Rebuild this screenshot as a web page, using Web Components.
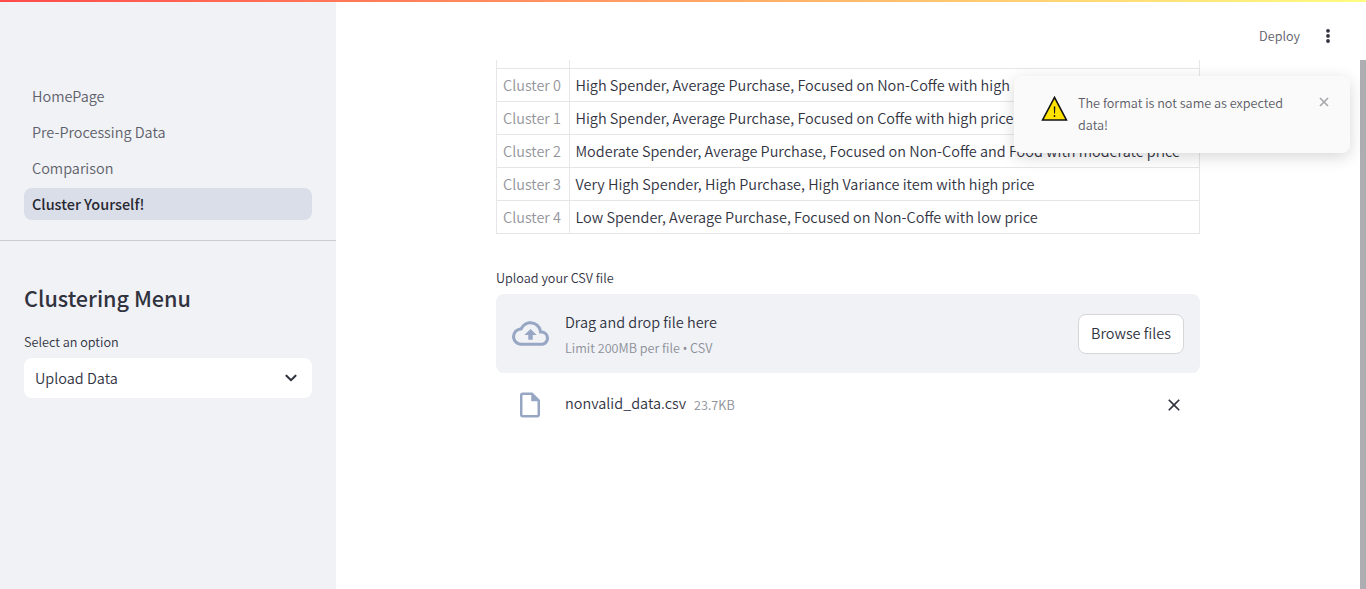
<!DOCTYPE html>
<html lang="en">
<head>
<meta charset="utf-8">
<title>Cluster Yourself!</title>
<style>
html,body{margin:0;height:100%;overflow:hidden;background:#fff}
body{font-family:"Noto Sans CJK SC","Noto Sans",sans-serif;font-weight:350;font-size:14.46px;line-height:24px;color:#31333f}
</style>
</head>
<body>
<app-shell>
  <side-bar slot="side">
    <nav-item slot="nav">HomePage</nav-item>
    <nav-item slot="nav">Pre-Processing Data</nav-item>
    <nav-item slot="nav">Comparison</nav-item>
    <nav-item slot="nav" active>Cluster Yourself!</nav-item>
    <select-box label="Select an option">Upload Data</select-box>
  </side-bar>
  <tool-bar slot="top"></tool-bar>
  <cluster-table>
    <cluster-row name=""></cluster-row>
    <cluster-row name="Cluster 0">High Spender, Average Purchase, Focused on Non-Coffe with high price</cluster-row>
    <cluster-row name="Cluster 1">High Spender, Average Purchase, Focused on Coffe with high price</cluster-row>
    <cluster-row name="Cluster 2">Moderate Spender, Average Purchase, Focused on Non-Coffe and Food with moderate price</cluster-row>
    <cluster-row name="Cluster 3">Very High Spender, High Purchase, High Variance item with high price</cluster-row>
    <cluster-row name="Cluster 4">Low Spender, Average Purchase, Focused on Non-Coffe with low price</cluster-row>
  </cluster-table>
  <file-uploader label="Upload your CSV file">
    <uploaded-file size="23.7KB">nonvalid_data.csv</uploaded-file>
  </file-uploader>
  <toast-message slot="toast">The format is not same as expected data!</toast-message>
</app-shell>
<script>
const define = (name, html) => customElements.define(name, class extends HTMLElement {
  constructor() {
    super();
    const t = document.createElement('template');
    t.innerHTML = html;
    this.attachShadow({mode: 'open'}).append(t.content.cloneNode(true));
    this.shadowRoot.querySelectorAll('[data-attr]').forEach(n => {
      n.textContent = this.getAttribute(n.dataset.attr) || '';
    });
  }
});

define('app-shell', `<style>
:host{display:grid;grid-template-columns:336px 1fr;height:100vh;position:relative;overflow:hidden}
.strip{position:absolute;inset:0 0 auto 0;height:2px;background:linear-gradient(90deg,#ff4b4b,#fffd80);z-index:2}
.page{display:grid;grid-template-rows:60px 1fr;min-width:0}
.view{display:grid;grid-template-columns:1fr 6px;min-height:0;overflow:hidden}
.col{padding:0 160px}
.bar{background:#adadb2}
.toast{position:absolute;top:76px;right:16px;z-index:3}
</style><div class="strip"></div><slot name="side"></slot>
<div class="page"><slot name="top"></slot><div class="view"><div class="col"><slot></slot></div><div class="bar"></div></div></div>
<div class="toast"><slot name="toast"></slot></div>`);

define('side-bar', `<style>
:host{display:block;background:#f0f2f6}
nav{display:flex;flex-direction:column;gap:4px;padding:80px 24px 20px;border-bottom:1px solid #cbcdd3}
section{padding:41px 24px 0}
h2{margin:0 0 18px;font-size:21.6px;line-height:32px;font-weight:500}
</style><nav><slot name="nav"></slot></nav><section><h2>Clustering Menu</h2><slot></slot></section>`);

define('nav-item', `<style>
:host{display:block;box-sizing:border-box;height:32px;line-height:32px;padding:0 8px;border-radius:8px;color:#5e6069}
:host([active]){background:#dadee9;color:#262730;font-weight:500}
</style><slot></slot>`);

define('select-box', `<style>
:host{display:block}
label{display:block;font-size:12.65px;line-height:20px;margin-bottom:6px}
.box{display:flex;align-items:center;justify-content:space-between;height:40px;padding:0 11px;background:#fff;border-radius:8px}
svg{width:20px;height:20px;display:block}
</style><label data-attr="label"></label><div class="box"><slot></slot>
<svg viewBox="0 0 24 24"><path fill="#31333f" fill-rule="evenodd" d="M12.707 15.707a1 1 0 0 1-1.414 0L5.646 10.061a1.25 1.25 0 1 1 1.77-1.77L12 12.88l4.583-4.589a1.25 1.25 0 1 1 1.77 1.77l-5.646 5.646Z"/></svg></div>`);

define('tool-bar', `<style>
:host{display:flex;box-sizing:border-box;align-items:center;justify-content:flex-end;gap:20px;height:60px;padding:12px 30px 0 0;font-size:12.65px;color:#5e6069}
svg{width:16px;height:16px;display:block}
</style><span>Deploy</span><svg viewBox="0 0 16 16" fill="#31333f"><circle cx="8" cy="2.8" r="1.9"/><circle cx="8" cy="7.9" r="1.9"/><circle cx="8" cy="13" r="1.9"/></svg>`);

define('cluster-table', `<style>
:host{display:block;box-sizing:border-box;border-left:1px solid #e6e6e9;border-right:1px solid #e6e6e9}
</style><slot></slot>`);

define('cluster-row', `<style>
:host{display:grid;box-sizing:border-box;grid-template-columns:73px 1fr;height:33px;border-bottom:1px solid #e6e6e9;white-space:nowrap}
:host([name=""]){height:9px}
span{padding:4px 5.5px 0;line-height:24px}
.n{padding-left:6px;color:#93949b;border-right:1px solid #e6e6e9}
</style><span class="n" data-attr="name"></span><span><slot></slot></span>`);

define('file-uploader', `<style>
:host{display:block;margin-top:34px}
label{display:block;font-size:12.65px;line-height:20px;margin-bottom:6px}
.drop{display:flex;box-sizing:border-box;align-items:center;height:79px;padding:0 16px;border-radius:8px;background:#f0f2f6}
svg{width:37px;height:37px;margin-right:16px;flex:none}
.txt{flex:1}
.txt small{display:block;font-size:12.65px;line-height:20px;margin-top:4px;color:#8d8f98}
.txt i{font:12px/1 "Noto Sans",sans-serif}
button{box-sizing:border-box;width:106px;height:40px;padding:0 0 2px;border:1px solid #d6d6d9;border-radius:8px;background:#fff;font:inherit;color:inherit}
</style><label data-attr="label"></label>
<div class="drop"><svg viewBox="0 0 24 24" fill="#97a6c3"><path d="M19.35 10.04A7.49 7.49 0 0 0 12 4C9.11 4 6.6 5.64 5.35 8.04A5.994 5.994 0 0 0 0 14c0 3.31 2.69 6 6 6h13c2.76 0 5-2.24 5-5 0-2.64-2.05-4.78-4.65-4.96zM19 18H6c-2.21 0-4-1.79-4-4 0-2.05 1.53-3.76 3.56-3.97l1.07-.11.5-.95A5.469 5.469 0 0 1 12 6c2.62 0 4.88 1.86 5.39 4.43l.3 1.5 1.53.11A2.98 2.98 0 0 1 22 15c0 1.65-1.35 3-3 3zM8 13h2.55v3h2.9v-3H16l-4-4z"/></svg>
<div class="txt">Drag and drop file here<small>Limit 200MB per file <i>•</i> CSV</small></div><button>Browse files</button></div><slot></slot>`);

define('uploaded-file', `<style>
:host{display:flex;align-items:center;height:32px;padding:16px 16px 0}
svg{display:block;flex:none}
.f{width:30px;height:30px;margin:0 20px 0 -1px;padding-left:4px}
.x{width:20px;height:20px;margin-left:auto}
span{padding-bottom:4px}
small{font-size:12.65px;margin-left:8px;padding-bottom:1px;color:#8d8f98}
</style><svg class="f" viewBox="0 0 24 24" fill="#97a6c3"><path d="M14 2H6c-1.1 0-1.99.9-1.99 2L4 20c0 1.1.89 2 1.99 2H18c1.1 0 2-.9 2-2V8l-6-6zM6 20V4h7v5h5v11H6z"/></svg>
<span><slot></slot></span><small data-attr="size"></small>
<svg class="x" viewBox="0 0 24 24" fill="#31333f"><path d="M19 6.41 17.59 5 12 10.59 6.41 5 5 6.41 10.59 12 5 17.59 6.41 19 12 13.41 17.59 19 19 17.59 13.41 12z"/></svg>`);

define('toast-message', `<style>
:host{display:flex;box-sizing:border-box;width:336px;height:77px;padding:16px 20px 0 26px;border-radius:8px;background:#fafafa;box-shadow:0 4px 16px rgba(0,0,0,.16);font-size:12.65px;line-height:22px;color:#5a5c66}
.w{width:29px;height:28px;margin:2px 9px 0 0;flex:none}
p{margin:0;width:212px}
.x{width:12px;height:12px;margin:4px 0 0 auto}
</style><svg class="w" viewBox="0 0 29 28"><path d="M14.5 3.4 26.4 26H2.6z" fill="#ffe200" stroke="#111" stroke-width="1.6"/><path d="M13.8 12.4h1.5l-.3 7h-.9z" fill="#111"/><circle cx="14.5" cy="22" r=".9" fill="#111"/></svg>
<p><slot></slot></p><svg class="x" viewBox="0 0 12 12" stroke="#a8a8ad" stroke-width="1.7"><path d="M2 2l8 8M10 2l-8 8"/></svg>`);
</script>
</body>
</html>
